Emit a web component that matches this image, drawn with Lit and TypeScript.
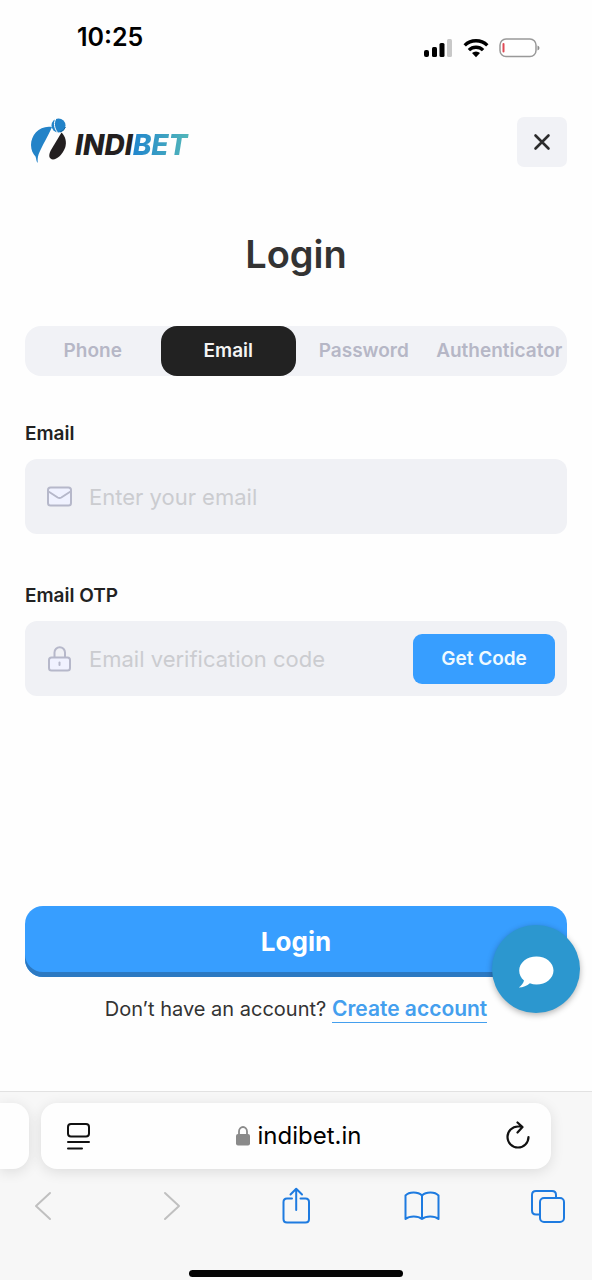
import { LitElement, html, css, svg } from "lit";
import { customElement, state } from "lit/decorators.js";
import { classMap } from "lit/directives/class-map.js";

const TABS = ["Phone", "Email", "Password", "Authenticator"];

@customElement("status-bar")
class StatusBar extends LitElement {
  static styles = css`
    :host {
      display: flex;
      justify-content: space-between;
      align-items: flex-start;
      padding: 20px 51px 0 77px;
      height: 72px;
      box-sizing: border-box;
      color: #000;
    }
    .time {
      font-size: 25px;
      line-height: 34px;
      font-weight: 600;
    }
    .signals {
      display: flex;
      align-items: center;
      gap: 10px;
      padding-top: 18px;
    }
    svg {
      display: block;
    }
  `;
  render() {
    return html`
      <span class="time">10:25</span>
      <div class="signals">
        <svg width="30" height="20" viewBox="0 0 30 20" aria-label="Mobile signal">
          <rect x="1" y="12" width="5" height="7" rx="2" />
          <rect x="9" y="9" width="5" height="10" rx="1.500" />
          <rect x="16.500" y="5" width="5" height="14" rx="1.500" />
          <rect x="24" y="1" width="5" height="18" rx="1.500" fill="#c8c8c8" />
        </svg>
        <svg width="26" height="20" viewBox="0 0 26 20" aria-label="Wi-Fi">
          <g fill="none" stroke="#000" stroke-width="3.400">
            <path d="M1.700 7.400a16.200 16.200 0 0 1 22.600 0" />
            <path d="M5.900 12.100a10.200 10.200 0 0 1 14.200 0" />
          </g>
          <path d="M13 19.300l-4-4.200a5.800 5.800 0 0 1 8 0z" />
        </svg>
        <svg width="42" height="20" viewBox="0 0 42 20" aria-label="Battery low">
          <rect x="1" y="1" width="36" height="17.500" rx="6" fill="#fff" stroke="#999" stroke-width="1.500" />
          <rect x="3.500" y="5" width="2" height="9.500" rx="1" fill="#e04a55" />
          <path d="M38.500 7.500q2 .8 2 2.500t-2 2.500z" fill="#8c8c8c" />
        </svg>
      </div>
    `;
  }
}

@customElement("brand-logo")
class BrandLogo extends LitElement {
  static styles = css`
    :host {
      display: flex;
      align-items: center;
      gap: 8px;
    }
    .word {
      font-family: "Inter", sans-serif;
      font-size: 28px;
      line-height: 32px;
      font-weight: 800;
      font-style: italic;
      color: #231f20;
      padding-top: 6px;
    }
    .tail {
      background: linear-gradient(90deg, #2186cd, #55b9b8);
      -webkit-background-clip: text;
      background-clip: text;
      color: transparent;
      padding-right: 4px;
    }
  `;
  render() {
    return html`
      <svg width="37" height="49" viewBox="0 0 37 49" aria-hidden="true">
        <path d="M22 9C10 7 1 16.500 1 27c0 5 2 9 4.500 11.500C6.500 41 6 43 7.700 45c0-3-.3-5.500 1-9C12 28 18 18 22 9z" fill="#2383c8" />
        <path d="M31.500 14.500c4 3.500 5.500 10 3.500 15.500-2.500 6.500-8 11.500-12 11.500-4-.5-5-4-2-9.500z" fill="#231f20" />
        <circle cx="28.500" cy="7.500" r="7" fill="#2383c8" />
        <path d="M26 .5c-2.500 4-2 9.500 1.500 14" fill="none" stroke="#fff" stroke-width="1" />
        <path d="M30 14q4-1 5.500-5" fill="none" stroke="#14659f" stroke-width="1" />
      </svg>
      <span class="word">INDI<span class="tail">BET</span></span>
    `;
  }
}

@customElement("login-form")
class LoginForm extends LitElement {
  @state() private active = "Email";

  static styles = css`
    :host {
      display: flex;
      flex-direction: column;
      flex: 1;
      padding: 0 25px;
    }
    button,
    input {
      font: inherit;
      border: 0;
      margin: 0;
    }
    button {
      cursor: pointer;
      padding: 0;
    }
    svg {
      display: block;
      flex: none;
    }
    h1 {
      margin: 0;
      font-size: 38px;
      line-height: 48px;
      font-weight: 600;
      color: #333;
      text-align: center;
    }
    .tabs {
      display: grid;
      grid-template-columns: repeat(4, minmax(0, 1fr));
      margin-top: 48px;
      border-radius: 16px;
      background: #f1f2f6;
    }
    .tab {
      height: 50px;
      border-radius: 16px;
      background: none;
      color: #b6b7c6;
      font-size: 19px;
      line-height: 24px;
      font-weight: 600;
      white-space: nowrap;
      display: flex;
      justify-content: center;
      align-items: center;
    }
    .active {
      background: #222;
      color: #f4f4f4;
    }
    .label {
      display: block;
      font-size: 19px;
      line-height: 24px;
      font-weight: 600;
      color: #222;
      margin-bottom: 13px;
    }
    .group {
      margin-top: 46px;
    }
    .group + .group {
      margin-top: 50px;
    }
    .field {
      display: flex;
      align-items: center;
      height: 75px;
      box-sizing: border-box;
      border-radius: 12px;
      padding: 0 12px 0 21px;
      background: #f0f1f5;
      gap: 16px;
    }
    input {
      flex: 1;
      min-width: 0;
      padding: 0;
      background: none;
      outline: none;
      font-size: 22px;
      line-height: 30px;
      color: #222;
    }
    input::placeholder {
      color: #cbccd0;
      opacity: 1;
    }
    .code {
      width: 142px;
      height: 50px;
      border-radius: 9px;
      background: #379eff;
      color: #effaff;
      font-size: 19px;
      font-weight: 600;
    }
    .actions {
      position: relative;
      margin-top: auto;
      padding-bottom: 67px;
    }
    .submit {
      display: block;
      width: 100%;
      height: 71px;
      border-radius: 18px;
      background: #379eff;
      box-shadow: inset 0 -5px 0 #2c79c2;
      color: #fff;
      font-size: 26px;
      font-weight: 700;
    }
    .signup {
      margin: 18px 0 0;
      text-align: center;
      font-size: 20px;
      line-height: 29px;
      color: #333;
    }
    .signup a {
      display: inline-block;
      font-size: 21px;
      line-height: 27px;
      color: #449fee;
      font-weight: 600;
      text-decoration: none;
      border-bottom: 1px solid #449fee;
    }
    .chat {
      position: absolute;
      right: -13px;
      top: 19px;
      width: 88px;
      height: 88px;
      border-radius: 50%;
      background: #2c97cf;
      box-shadow: 0 2px 6px rgba(0, 0, 0, 0.3);
      display: grid;
      place-items: center;
    }
  `;

  render() {
    return html`
      <h1>Login</h1>
      <div class="tabs" role="tablist">
        ${TABS.map(
          (name) => html`<button
            role="tab"
            aria-selected=${this.active === name}
            class=${classMap({ tab: true, active: this.active === name })}
            @click=${() => (this.active = name)}
          >${name}</button>`
        )}
      </div>
      <div class="group">
        <label class="label" for="email">Email</label>
        <div class="field">
          <svg width="27" height="24" viewBox="0 0 27 24" fill="none" stroke="#b6b8ca" stroke-width="2" stroke-linejoin="round">
            <rect x="2" y="2.500" width="23" height="18" rx="2.500" fill="#f0f2ff" />
            <path d="M2.500 6.500l9.200 6q1.800 1.100 3.600 0l9.200-6" />
          </svg>
          <input id="email" type="email" placeholder="Enter your email" />
        </div>
      </div>
      <div class="group">
        <label class="label" for="otp">Email OTP</label>
        <div class="field">
          <svg width="27" height="28" viewBox="0 0 27 28" fill="none" stroke="#b6b8ca" stroke-width="2" stroke-linecap="round">
            <path d="M8.500 12.500V7.500a5 5 0 0 1 10.500 0v5" />
            <rect x="3" y="12.500" width="21" height="13" rx="2.500" fill="#f0f2ff" />
            <path d="M13.500 17.500v2.500" />
          </svg>
          <input id="otp" type="text" placeholder="Email verification code" />
          <button class="code">Get Code</button>
        </div>
      </div>
      <div class="actions">
        <button class="submit">Login</button>
        <p class="signup">Don’t have an account? <a href="#create">Create account</a></p>
        <button class="chat" aria-label="Open chat">
          <svg width="36" height="38" viewBox="0 -4 36 38" fill="#fff">
            <path d="M18.500 2.500C28 2.500 35.500 8.700 35.500 16.500S28 30.500 18.500 30.500c-2.400 0-4.600-.4-6.600-1.200C9 31.800 5.200 33.500.8 33.500c2.600-2 4.600-4.400 5.200-7C2.900 24 1.200 20.500 1.200 16.500 1.200 8.700 9 2.500 18.500 2.500z" />
          </svg>
        </button>
      </div>
    `;
  }
}

const toolIcons = [
  { name: "Back", off: true, art: svg`<path d="M26 7L12 20l14 13" />` },
  { name: "Forward", off: true, art: svg`<path d="M15 7l14 13-14 13" />` },
  {
    name: "Share",
    off: false,
    art: svg`<path d="M16 12.500h-5q-3.500 0-3.500 3.500v17q0 3.500 3.500 3.500h18.500q3.500 0 3.500-3.500v-17q0-3.500-3.500-3.500h-5M20.200 24V3M14.500 8.500L20.200 2.800 26 8.500" />`,
  },
  {
    name: "Bookmarks",
    off: false,
    art: svg`<path d="M20 9.500C16 5.500 7 5.500 3.500 9.500V33c4-3.500 12.500-3.500 16.500 0 4-3.500 12.500-3.500 16.500 0V9.500C33 5.500 24 5.500 20 9.500zM20 9.500V33" />`,
  },
  {
    name: "Tabs",
    off: false,
    art: svg`<path d="M11.500 28.500H8q-4 0-4-4V9q0-4 4-4h16q4 0 4 4v3" /><rect x="12" y="12" width="24" height="24" rx="4" />`,
  },
];

@customElement("browser-bar")
class BrowserBar extends LitElement {
  static styles = css`
    :host {
      display: block;
      background: #f7f7f7;
      border-top: 1px solid #e2e2e2;
      overflow: hidden;
    }
    button {
      border: 0;
      padding: 0;
      background: none;
      cursor: pointer;
    }
    svg {
      display: block;
    }
    .tabs {
      display: flex;
      gap: 12px;
      padding: 11px 41px 0 0;
    }
    .previous,
    .address {
      height: 66px;
      background: #fefefe;
      box-shadow: 0 3px 14px rgba(0, 0, 0, 0.11);
    }
    .previous {
      width: 29px;
      border-radius: 0 16px 16px 0;
    }
    .address {
      flex: 1;
      display: flex;
      align-items: center;
      justify-content: space-between;
      border-radius: 16px;
      box-sizing: border-box;
      padding: 0 19px 0 23px;
    }
    .site {
      display: flex;
      align-items: center;
      gap: 7px;
      font-size: 24px;
      line-height: 32px;
      color: #000;
    }
    .tools {
      display: flex;
      justify-content: space-between;
      padding: 17px 24px 0;
    }
    .tool {
      color: #1e7be0;
    }
    .off {
      color: #c0c0c0;
    }
    .home {
      width: 36%;
      height: 7px;
      border-radius: 4px;
      background: #000;
      margin: 44px auto 3px;
    }
  `;
  render() {
    return html`
      <div class="tabs">
        <div class="previous"></div>
        <div class="address">
          <button aria-label="Page menu">
            <svg width="28" height="30" viewBox="0 0 28 30" fill="none" stroke="#111" stroke-width="2" stroke-linecap="round">
              <rect x="4" y="3" width="21" height="12.500" rx="3" />
              <path d="M4 21h21M4 27.500h14" />
            </svg>
          </button>
          <div class="site">
            <svg width="16" height="22" viewBox="0 0 16 22">
              <path d="M4 10V6.500a4 4.500 0 0 1 8 0V10" fill="none" stroke="#8a8a8a" stroke-width="1.800" />
              <rect x="1" y="9" width="14" height="11.500" rx="2" fill="#8a8a8a" />
            </svg>
            <span>indibet.in</span>
          </div>
          <button aria-label="Reload">
            <svg width="28" height="30" viewBox="0 0 28 30" fill="none" stroke="#111" stroke-width="2.200" stroke-linecap="round" stroke-linejoin="round">
              <path d="M24.500 16a10.500 10.500 0 1 1-10.500-10.500h4M13.500 1.500l5 4.500-5 5.500" />
            </svg>
          </button>
        </div>
      </div>
      <div class="tools">
        ${toolIcons.map(
          (t) => html`<button class=${classMap({ tool: true, off: t.off })} aria-label=${t.name}>
            <svg width="40" height="40" viewBox="0 0 40 40" fill="none" stroke="currentColor" stroke-width="2" stroke-linecap="round" stroke-linejoin="round">${t.art}</svg>
          </button>`
        )}
      </div>
      <div class="home"></div>
    `;
  }
}

@customElement("app-root")
class AppRoot extends LitElement {
  static styles = css`
    :host {
      display: flex;
      flex-direction: column;
      min-height: 100vh;
      background: #fefefe;
      font-family: "Inter", sans-serif;
    }
    .top {
      display: flex;
      justify-content: space-between;
      align-items: center;
      padding: 45px 25px 63px 30px;
    }
    .close {
      width: 50px;
      height: 50px;
      border: 0;
      border-radius: 7px;
      background: #f1f2f6;
      display: grid;
      place-items: center;
      cursor: pointer;
    }
  `;
  render() {
    return html`
      <status-bar></status-bar>
      <header class="top">
        <brand-logo></brand-logo>
        <button class="close" aria-label="Close">
          <svg width="18" height="18" viewBox="0 0 18 18" fill="none" stroke="#2c2c2c" stroke-width="2.600" stroke-linecap="round">
            <path d="M2.500 2.500l13 13M15.500 2.500l-13 13" />
          </svg>
        </button>
      </header>
      <login-form></login-form>
      <browser-bar></browser-bar>
    `;
  }
}
